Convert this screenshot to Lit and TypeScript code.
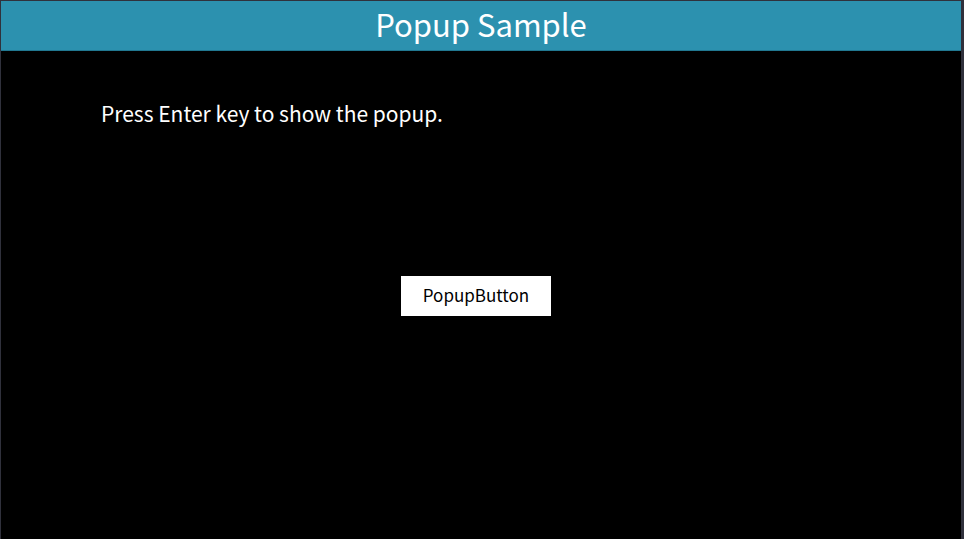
import { LitElement, html, css } from "lit";
import { customElement } from "lit/decorators.js";

@customElement("app-root")
export class AppRoot extends LitElement {
  static styles = css`
    :host {
      display: flex;
      flex-direction: column;
      box-sizing: border-box;
      min-height: 100vh;
      border: 1px solid #30313c;
      border-right-width: 3px;
      border-bottom: 0;
      background: #000;
      color: #fff;
      font-family: "Noto Sans CJK KR", "Noto Sans", sans-serif;
    }
    .title {
      padding-bottom: 3px;
      border-bottom: 1px solid #217891;
      background: #2c91af;
      text-align: center;
    }
    .title h1 {
      margin: 0;
      font-size: 31px;
      font-weight: 400;
      line-height: 46px;
    }
    .content {
      display: flex;
      flex-direction: column;
      padding: 47px 100px;
    }
    .hint {
      margin: 0;
      font-size: 21px;
      line-height: 30px;
    }
    .popup-button {
      align-self: center;
      width: 150px;
      height: 40px;
      margin: 148px 10px 0 0;
      padding: 0 0 4px;
      border: 0;
      background: #fff;
      color: #000;
      font-family: inherit;
      font-size: 17px;
    }
  `;

  render() {
    return html`
      <header class="title"><h1>Popup Sample</h1></header>
      <main class="content">
        <p class="hint">Press Enter key to show the popup.</p>
        <button class="popup-button" type="button">PopupButton</button>
      </main>
    `;
  }
}
